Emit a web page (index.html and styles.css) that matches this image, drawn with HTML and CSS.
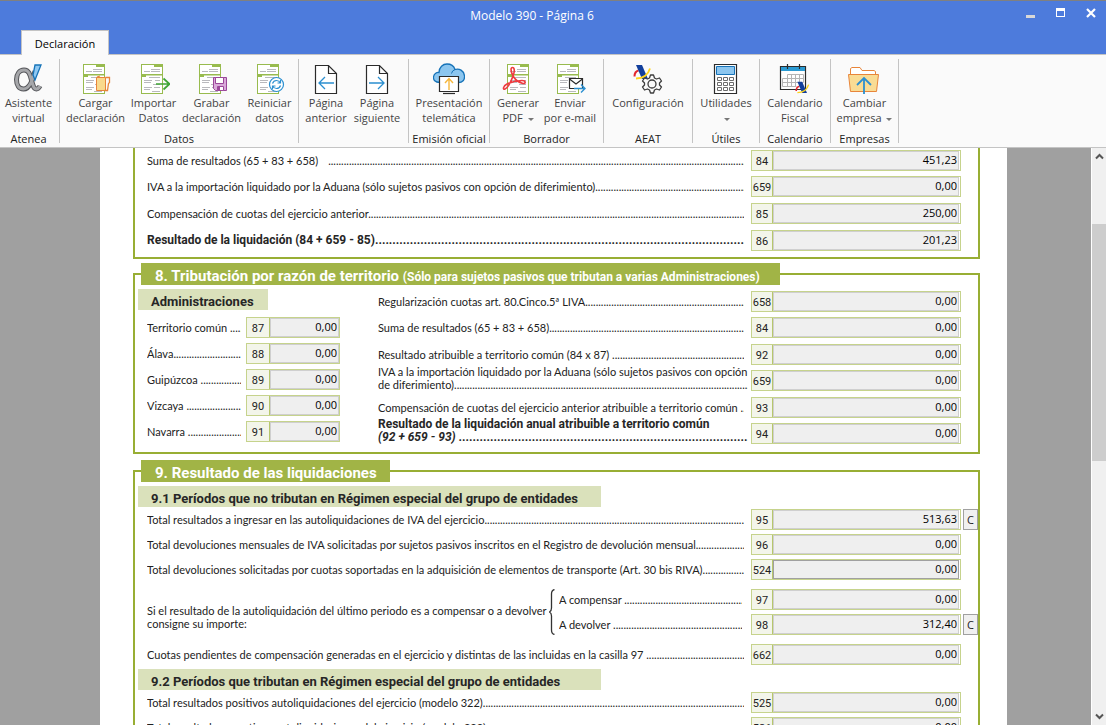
FILE: index.html
```html
<!DOCTYPE html>
<html lang="es">
<head>
<meta charset="utf-8">
<title>Modelo 390 - Página 6</title>
<link rel="stylesheet" href="styles.css">
</head>
<body>
<svg class="defs" aria-hidden="true">
  <symbol id="doc" viewBox="0 0 32 32">
    <rect x="3.5" y="1.5" width="21" height="29" fill="#fff" stroke="#98bb4e"/>
    <path d="M16 1h9v3h-9zM3 11h22v1.500H3zM3 12h5v2H3z" fill="#98bb4e"/>
    <path d="M13 6.500h9M6 8.500h6M13 8.500h9M11 14.500h11M6 17.500h8M17 17.500h5M6 19.500h7M15 21.500h7M6 24.500h8M16 24.500h6M6 26.500h6M14 28.500h8" stroke="#b9b9bd" fill="none"/>
  </symbol>
  <symbol id="aeat" viewBox="0 0 20 20">
    <path d="M1.500 12.500q0-5 4-6" fill="none" stroke="#e3262c" stroke-width="2"/>
    <path d="M3 1h6l6 14H9z" fill="#123f9c"/>
    <path d="M3 14.500q11 0 14-10" fill="none" stroke="#ffd51c" stroke-width="1.800"/>
  </symbol>
</svg>

<header class="top">
  <div class="titlebar">
    <h1 class="title">Modelo 390 - Página 6</h1>
    <div class="window-buttons">
      <button class="win" aria-label="Minimizar"><svg width="10" height="10"><path d="M0 7h9v3H0z" fill="#d8d8d8"/></svg></button>
      <button class="win" aria-label="Maximizar"><svg width="10" height="10"><path d="M0 0h9v9H0zM1 3v5h7V3z" fill="#fff" fill-rule="evenodd"/></svg></button>
      <button class="win" aria-label="Cerrar"><svg width="10" height="10"><path d="M1 1l8 8M9 1l-8 8" stroke="#fff" stroke-width="2.200"/></svg></button>
    </div>
  </div>
  <nav class="tabs"><button class="tab">Declaración</button></nav>
</header>

<div class="ribbon">
  <section class="group g-atenea">
    <div class="tools">
      <button class="tool">
        <svg class="icon" viewBox="0 0 32 32"><path d="M23 8C21 16 18 26 11.500 26C7 26 4.500 22 4.500 16.500C4.500 11 7.500 7 12 7C19 7 18.500 17 21.500 23.500C22.500 26.500 26 27 28 23" fill="none" stroke="#55565a" stroke-width="5"/><path d="M23 8C21 16 18 26 11.500 26C7 26 4.500 22 4.500 16.500C4.500 11 7.500 7 12 7C19 7 18.500 17 21.500 23.500C22.500 26.500 26 27 28 23" fill="none" stroke="#a6a7aa" stroke-width="3"/><path d="M23 2h6l-6 15-2-5z" fill="#8fc8f2" stroke="#1673b8" stroke-width="1.300"/></svg>
        <span>Asistente<br>virtual</span></button>
    </div>
    <h2 class="group-name">Atenea</h2>
  </section>
  <section class="group g-datos">
    <div class="tools cols-4">
      <button class="tool">
        <svg class="icon" viewBox="0 0 32 32"><use href="#doc"/><path d="M16.500 14.500h9v13h-9z" fill="#f9d98c" stroke="#e8853a"/><path d="M17 14l3-1M25.500 14.500h4v5l-1 1-1 7h-3" fill="none" stroke="#e8853a" stroke-width="1.300"/></svg>
        <span>Cargar<br>declaración</span></button>
      <button class="tool">
        <svg class="icon" viewBox="0 0 32 32"><use href="#doc"/><path d="M18 21h13M25.500 15.500l6 5.500-6 5.500" fill="none" stroke="#3fa535" stroke-width="1.700"/></svg>
        <span>Importar<br>Datos</span></button>
      <button class="tool">
        <svg class="icon" viewBox="0 0 32 32"><use href="#doc"/><path d="M17.500 14.500h13v13h-11l-2-2z" fill="#d9a9d9" stroke="#9b4799"/><path d="M19.500 14.500h8v6h-8zM21.500 23.500h6v4h-6z" fill="#fff" stroke="#9b4799"/><path d="M22 24h2v3h-2z" fill="#9b4799"/></svg>
        <span>Grabar<br>declaración</span></button>
      <button class="tool">
        <svg class="icon" viewBox="0 0 32 32"><use href="#doc"/><circle cx="22.500" cy="21.500" r="7" fill="#fff" stroke="#2b8fd0" stroke-width="1.200"/><path d="M18.500 20.500q1-3 4-3 2.500 0 4 2.500M26.500 17v3h-3M26.500 22.500q-1 3-4 3-2.500 0-4-2.500M18.500 26v-3h3" fill="none" stroke="#2b8fd0" stroke-width="1.200"/></svg>
        <span>Reiniciar<br>datos</span></button>
    </div>
    <h2 class="group-name">Datos</h2>
  </section>
  <section class="group g-paginas">
    <div class="tools cols-2">
      <button class="tool">
        <svg class="icon" viewBox="0 0 32 32"><path d="M5.500 2.500h13l8 8v20h-21zM18.500 2.500v8h8" fill="#fff" stroke="#2b2b2b" stroke-width="1.200"/><path d="M9 20h15M15 14l-6 6 6 6" fill="none" stroke="#2b8fd0" stroke-width="1.300"/></svg>
        <span>Página<br>anterior</span></button>
      <button class="tool">
        <svg class="icon" viewBox="0 0 32 32"><path d="M5.500 2.500h13l8 8v20h-21zM18.500 2.500v8h8" fill="#fff" stroke="#2b2b2b" stroke-width="1.200"/><path d="M8 20h15M17 14l6 6-6 6" fill="none" stroke="#2b8fd0" stroke-width="1.300"/></svg>
        <span>Página<br>siguiente</span></button>
    </div>
  </section>
  <section class="group g-emision">
    <div class="tools">
      <button class="tool">
        <svg class="icon" viewBox="0 0 32 32"><path d="M7 19.500C2 19.500 0 17 .600 13.500 1 10.500 4 9 6 9.500 6 4 10 1 14 1c4 0 7 2.500 8 5.500 4-1.500 9 1 9.500 6.500.300 4-2 6.500-6 6.500z" fill="#8cc6ef" stroke="#1673b8" stroke-width="1.300"/><path d="M22 6.500q-3 1-3.500 4" fill="none" stroke="#1673b8"/><path d="M6.500 13.500h19v15h-19z" fill="#fff" stroke="#2b2b2b" stroke-width="1.200"/><path d="M10 30.500h12" stroke="#2b2b2b" stroke-width="1.200"/><path d="M16 27V16M12 20l4-4.500 4 4.500" fill="none" stroke="#f6b73c" stroke-width="1.400"/></svg>
        <span>Presentación<br>telemática</span></button>
    </div>
    <h2 class="group-name">Emisión oficial</h2>
  </section>
  <section class="group g-borrador">
    <div class="tools cols-2">
      <button class="tool">
        <svg class="icon" viewBox="0 0 32 32"><use href="#doc" x="2" width="32" height="32"/><path d="M11 13C8.500 8 8.500 4.500 10.500 4.500S13 8 11 13C9 18.500 5.500 25 3 26S1 23 5 21C9 19 16 17.500 20 17.500S24 21 21 20.500C17 19.500 13 16.500 11 13z" fill="none" stroke="#ee3a3f" stroke-width="1.600"/></svg>
        <span>Generar<br>PDF <i class="caret"></i></span></button>
      <button class="tool">
        <svg class="icon" viewBox="0 0 32 32"><use href="#doc"/><path d="M15.500 15.500h13v10h-13z" fill="#fff" stroke="#2b2b2b" stroke-width="1.200"/><path d="M15.500 16l6.500 5 6.500-5" fill="none" stroke="#2b2b2b" stroke-width="1.200"/><path d="M20 25.500h11M27 21.500l4 4-4 4" fill="none" stroke="#2b8fd0" stroke-width="1.400"/></svg>
        <span>Enviar<br>por e-mail</span></button>
    </div>
    <h2 class="group-name">Borrador</h2>
  </section>
  <section class="group g-aeat">
    <div class="tools">
      <button class="tool">
        <svg class="icon" viewBox="0 0 32 32"><use href="#aeat" x="1" y="1" width="20" height="20"/><path d="M18.500 12h3l1 3 2 1 3-1 2 3-2 2v2l2 2-2 3-3-1-2 1-1 3h-3l-1-3-2-1-3 1-2-3 2-2v-2l-2-2 2-3 3 1 2-1z" fill="#fafafa" stroke="#3d3d3d" stroke-width="1.300" stroke-linejoin="round"/><circle cx="20" cy="21" r="4" fill="none" stroke="#3d3d3d" stroke-width="1.300"/></svg>
        <span>Configuración</span></button>
    </div>
    <h2 class="group-name">AEAT</h2>
  </section>
  <section class="group g-utiles">
    <div class="tools">
      <button class="tool">
        <svg class="icon" viewBox="0 0 32 32"><path d="M4.500 1.500h22v29h-22z" fill="#fff" stroke="#2b2b2b" stroke-width="1.200"/><path d="M6.500 3.500h18v8h-18z" fill="#8cc6ef" stroke="#1673b8"/><path d="M7.500 14.500h4v3h-4zM13.500 14.500h4v3h-4zM19.500 14.500h4v3h-4zM7.500 19.500h4v3h-4zM13.500 19.500h4v3h-4zM19.500 19.500h4v3h-4zM7.500 24.500h4v3h-4zM13.500 24.500h4v3h-4zM19.500 24.500h4v3h-4z" fill="#fff" stroke="#6b6b6b"/></svg>
        <span>Utilidades<br><i class="caret"></i></span></button>
    </div>
    <h2 class="group-name">Útiles</h2>
  </section>
  <section class="group g-calendario">
    <div class="tools">
      <button class="tool">
        <svg class="icon" viewBox="0 0 32 32"><path d="M1.500 3.500h25v23h-25z" fill="#fff" stroke="#2b2b2b" stroke-width="1.200"/><path d="M2 4h24v4H2z" fill="#2b9bd3"/><path d="M8.500 1v5M20.500 1v5" stroke="#2b2b2b" stroke-width="1.200"/><path d="M8.500 11.500h16M3.500 15.500h21M3.500 19.500h21M3.500 23.500h14M3.500 15.500v8M8.500 11.500v12M12.500 11.500v12M16.500 11.500v12M20.500 11.500v8M24.500 11.500v8" fill="none" stroke="#b5b5b5"/><use href="#aeat" x="16" y="18" width="16" height="16"/></svg>
        <span>Calendario<br>Fiscal</span></button>
    </div>
    <h2 class="group-name">Calendario</h2>
  </section>
  <section class="group g-empresas">
    <div class="tools">
      <button class="tool">
        <svg class="icon" viewBox="0 0 32 32"><path d="M2.500 11.500v-6l1.500-1h8l2 3h12l1.500 1v3" fill="#fff" stroke="#e8853a"/><path d="M.500 11.500h30l-2 17h-26z" fill="#f9dc94" stroke="#e8853a"/><path d="M16 31V15M9 22l7-7 7 7" fill="none" stroke="#2b8fd0" stroke-width="1.800"/></svg>
        <span>Cambiar<br>empresa <i class="caret"></i></span></button>
    </div>
    <h2 class="group-name">Empresas</h2>
  </section>
</div>

<main class="viewer">
  <div class="desk">
    <form class="page">
      <section class="block first">
        <div class="row"><label class="label spaced" for="a84">Suma de resultados (65 + 83 + 658)</label><div class="box"><span class="code">84</span><input class="value" id="a84" value="451,23"></div></div>
        <div class="row tight"><label class="label" for="a659">IVA a la importación liquidado por la Aduana (sólo sujetos pasivos con opción de diferimiento)</label><div class="box"><span class="code">659</span><input class="value" id="a659" value="0,00"></div></div>
        <div class="row"><label class="label" for="a85">Compensación de cuotas del ejercicio anterior</label><div class="box"><span class="code">85</span><input class="value" id="a85" value="250,00"></div></div>
        <div class="row"><label class="label strong" for="a86">Resultado de la liquidación (84 + 659 - 85)</label><div class="box"><span class="code">86</span><input class="value" id="a86" value="201,23"></div></div>
      </section>

      <section class="block">
        <h2 class="heading wide">8. Tributación por razón de territorio <small>(Sólo para sujetos pasivos que tributan a varias Administraciones)</small></h2>
        <div class="territory">
          <div class="admins">
            <h3 class="band short">Administraciones</h3>
            <div class="row"><label class="label" for="b87">Territorio común </label><div class="box"><span class="code">87</span><input class="value" id="b87" value="0,00"></div></div>
            <div class="row tight"><label class="label" for="b88">Álava</label><div class="box"><span class="code">88</span><input class="value" id="b88" value="0,00"></div></div>
            <div class="row tight"><label class="label" for="b89">Guipúzcoa </label><div class="box"><span class="code">89</span><input class="value" id="b89" value="0,00"></div></div>
            <div class="row tight"><label class="label" for="b90">Vizcaya </label><div class="box"><span class="code">90</span><input class="value" id="b90" value="0,00"></div></div>
            <div class="row tight"><label class="label" for="b91">Navarra </label><div class="box"><span class="code">91</span><input class="value" id="b91" value="0,00"></div></div>
          </div>
          <div class="results">
            <div class="row"><label class="label" for="c658">Regularización cuotas art. 80.Cinco.5ª LIVA</label><div class="box"><span class="code">658</span><input class="value" id="c658" value="0,00"></div></div>
            <div class="row tight"><label class="label" for="c84">Suma de resultados (65 + 83 + 658)</label><div class="box"><span class="code">84</span><input class="value" id="c84" value="0,00"></div></div>
            <div class="row"><label class="label" for="c92">Resultado atribuible a territorio común (84 x 87) </label><div class="box"><span class="code">92</span><input class="value" id="c92" value="0,00"></div></div>
            <div class="row tight two-line"><label class="label" for="c659">IVA a la importación liquidado por la Aduana (sólo sujetos pasivos con opción<br>de diferimiento)</label><div class="box"><span class="code">659</span><input class="value" id="c659" value="0,00"></div></div>
            <div class="row"><label class="label" for="c93">Compensación de cuotas del ejercicio anterior atribuible a territorio común </label><div class="box"><span class="code">93</span><input class="value" id="c93" value="0,00"></div></div>
            <div class="row tight two-line"><label class="label strong" for="c94">Resultado de la liquidación anual atribuible a territorio común<br><em>(92 + 659 - 93) </em></label><div class="box"><span class="code">94</span><input class="value" id="c94" value="0,00"></div></div>
          </div>
        </div>
      </section>

      <section class="block">
        <h2 class="heading">9. Resultado de las liquidaciones</h2>
        <h3 class="band">9.1 Períodos que no tributan en Régimen especial del grupo de entidades</h3>
        <div class="dense">
          <div class="row"><label class="label" for="d95">Total resultados a ingresar en las autoliquidaciones de IVA del ejercicio</label><div class="box"><span class="code">95</span><input class="value" id="d95" value="513,63"></div><button class="calc" type="button">C</button></div>
          <div class="row"><label class="label" for="d96">Total devoluciones mensuales de IVA solicitadas por sujetos pasivos inscritos en el Registro de devolución mensual</label><div class="box"><span class="code">96</span><input class="value" id="d96" value="0,00"></div></div>
          <div class="row"><label class="label" for="d524">Total devoluciones solicitadas por cuotas soportadas en la adquisición de elementos de transporte (Art. 30 bis RIVA)</label><div class="box"><span class="code">524</span><input class="value current" id="d524" value="0,00"></div></div>
          <div class="choice">
            <p class="question">Si el resultado de la autoliquidación del último periodo es a compensar o a devolver<br>consigne su importe:</p>
            <svg class="brace" viewBox="0 0 6 46" width="6" height="46"><path d="M5.500.500Q2.500 1 2.500 5v14q0 3-2 4 2 1 2 4v14q0 4 3 4.500" fill="none" stroke="#333" stroke-width="1.300"/></svg>
            <div class="options">
              <div class="row"><label class="label" for="d97">A compensar </label><div class="box"><span class="code">97</span><input class="value" id="d97" value="0,00"></div></div>
              <div class="row"><label class="label" for="d98">A devolver </label><div class="box"><span class="code">98</span><input class="value" id="d98" value="312,40"></div><button class="calc" type="button">C</button></div>
            </div>
          </div>
          <div class="row"><label class="label" for="d662">Cuotas pendientes de compensación generadas en el ejercicio y distintas de las incluidas en la casilla 97 </label><div class="box"><span class="code">662</span><input class="value" id="d662" value="0,00"></div></div>
        </div>
        <h3 class="band">9.2 Períodos que tributan en Régimen especial del grupo de entidades</h3>
        <div class="dense">
          <div class="row"><label class="label" for="e525">Total resultados positivos autoliquidaciones del ejercicio (modelo 322)</label><div class="box"><span class="code">525</span><input class="value" id="e525" value="0,00"></div></div>
          <div class="row"><label class="label" for="e526">Total resultados negativos autoliquidaciones del ejercicio (modelo 322)</label><div class="box"><span class="code">526</span><input class="value" id="e526" value="0,00"></div></div>
        </div>
      </section>
    </form>
  </div>
  <div class="scrollbar">
    <button class="arrow" aria-label="Subir"><svg width="9" height="7"><path d="M1 5.500l3.500-3.500L8 5.500" fill="none" stroke="#555" stroke-width="2"/></svg></button>
    <div class="track"><div class="thumb"></div></div>
    <button class="arrow" aria-label="Bajar"><svg width="9" height="7"><path d="M1 1.500L4.500 5 8 1.500" fill="none" stroke="#555" stroke-width="2"/></svg></button>
  </div>
</main>
</body>
</html>
```

FILE: styles.css
```css
* { box-sizing: border-box; }

body {
  margin: 0;
  height: 100vh;
  display: flex;
  flex-direction: column;
  overflow: hidden;
  font: 11px/15px "Open Sans", "Noto Sans", sans-serif;
  color: #222;
}

h1, h2, h3, p { margin: 0; font-weight: normal; }
button, input { font: inherit; color: inherit; border: 0; padding: 0; background: none; }
.defs { display: none; }

/* Title bar and tabs */
.top { flex: none; background: #4d7bdc; border-top: 1px solid #808080; border-bottom: 1px solid #c4c4c4; }
.titlebar { display: grid; grid-template-columns: 1fr auto 1fr; height: 29px; }
.title { grid-column: 2; color: #fff; font-size: 12px; line-height: 30px; padding-right: 42px; }
.window-buttons { display: flex; align-items: flex-start; justify-content: flex-end; gap: 20px; padding: 7px 10px 0 0; }
.win { display: flex; }
.tabs { display: flex; padding-left: 21px; height: 24px; }
.tab {
  width: 88px;
  height: 25px;
  background: #fafafa;
  border: 1px solid #c4c4c4;
  border-bottom: 0;
  color: #000;
}

/* Ribbon */
.ribbon {
  flex: none;
  display: flex;
  height: 93px;
  padding: 4px 0;
  background: #fafafa;
  border-bottom: 1px solid #c4c4c4;
}
.group { display: flex; flex-direction: column; justify-content: space-between; border-right: 1px solid #c4c4c4; }
.tools { display: grid; justify-content: center; padding-top: 4px; }
.cols-4 { grid-template-columns: repeat(4, 58px); padding-left: 7px; }
.tool { display: flex; flex-direction: column; align-items: center; color: #444; white-space: nowrap; }
.icon { width: 32px; height: 32px; }
.group-name { font-size: 11px; line-height: 15px; text-align: center; margin-bottom: -3px; white-space: nowrap; }
.caret {
  display: inline-block;
  margin-left: 2px;
  vertical-align: middle;
  border: 3px solid transparent;
  border-top-color: #777;
  border-bottom: 0;
}
.g-atenea { width: 60px; }
.g-atenea .tools, .g-atenea .group-name { padding-right: 2px; }
.g-datos { width: 239px; }
.g-paginas { width: 110px; }
.g-paginas .cols-2 { grid-template-columns: 51px 51px; padding-right: 4px; }
.g-emision { width: 81px; }
.g-borrador { width: 114px; }
.g-borrador .cols-2 { grid-template-columns: 52px 52px; padding-right: 5px; }
.g-aeat { width: 89px; }
.g-utiles { width: 67px; }
.g-calendario { width: 71px; }
.g-empresas { width: 68px; }

/* Form viewer */
.viewer { flex: 1; display: flex; min-height: 0; }
.desk { flex: 1; min-width: 0; overflow: hidden; padding: 0 84px 0 100px; background: #a0a0a0; }
.page {
  min-height: 100%;
  padding: 0 27px 0 33px;
  background: #fff;
  font-family: Lato, "Liberation Sans", sans-serif;
  font-size: 11px;
  line-height: 13px;
  color: #222;
}
.block { border: 2px solid #98ae34; margin-top: 16px; padding-bottom: 8px; }
.block.first { margin-top: 0; padding: 2px 0 6px; border-top: 0; }
.block.first + .block { margin-top: 14px; }
.heading, .band, .strong, .code { font-family: Roboto, "Liberation Sans", sans-serif; }
.heading {
  width: 249px;
  height: 22px;
  margin: -12px 0 0 6px;
  padding-left: 14px;
  background: #a1b446;
  color: #fff;
  font-size: 15px;
  line-height: 26px;
  font-weight: bold;
  white-space: nowrap;
}
.heading.wide { width: 639px; }
.heading small { font-size: 12px; }
.band {
  width: 463px;
  height: 21px;
  margin: 4px 0 2px 3px;
  padding-left: 13px;
  background: #dae1bb;
  color: #262626;
  font-size: 13px;
  line-height: 26px;
  font-weight: bold;
  white-space: nowrap;
}
.band.short { width: 130px; margin-bottom: 7px; }

.row { display: flex; align-items: center; height: 21px; margin-top: 6px; padding: 0 17px 0 12px; position: relative; }
.row.tight { margin-top: 5px; }
.row:first-child, .band + .row { margin-top: 0; }
.label { flex: 1; min-width: 0; height: 16px; padding-top: 1px; overflow: hidden; white-space: nowrap; margin-right: 7px; }
.label::after {
  content: "......................................................................................................................................................................................";
}
.label.spaced::after { margin-left: 10px; }
.two-line { align-items: flex-end; }
.two-line .label { height: 26px; padding-top: 0; margin-right: 3px; }
.strong { font-weight: bold; font-size: 12px; color: #262626; }
.box { flex: none; display: flex; width: 210px; height: 21px; border: 1px solid #c6d38c; padding-right: 1px; }
.code { flex: none; width: 21px; text-align: center; line-height: 21px; background: #f3f5ea; border-right: 1px solid #b7c76c; }
.value {
  flex: 1;
  min-width: 0;
  padding: 0 1px 3px 0;
  background: #efefef;
  border: 1px solid #cfcfcf;
  font: 11px "Open Sans", "Noto Sans", sans-serif;
  color: #000;
  text-align: right;
}
.value.current { border-color: #a0a0a0; }
.calc {
  position: absolute;
  right: 0;
  width: 15px;
  height: 21px;
  border: 1px solid #a0a0a0;
  background: #f0f0f0;
  font: 11px "Open Sans", "Noto Sans", sans-serif;
}

.territory { display: grid; grid-template-columns: 243px minmax(0, 1fr); }
.admins .row { padding-right: 38px; }
.admins .label { margin-right: 5px; }
.admins .box { width: 94px; padding-right: 0; }
.admins .code { width: 23px; }
.results { padding-top: 6px; }
.results .row { padding-left: 0; }

.dense .row { margin-top: 4px; }
.dense .row:first-child { margin-top: 0; }
.choice { display: flex; align-items: center; margin: 9px 0; padding-left: 12px; }
.question { flex: none; width: 402px; white-space: nowrap; padding-top: 10px; }
.brace { flex: none; }
.options { flex: 1; min-width: 0; }
.options .row { padding-left: 4px; }
.options .label { margin-right: 9px; }

/* Scroll bar */
.scrollbar { flex: none; width: 15px; display: flex; flex-direction: column; background: #f0f0f0; border-left: 1px solid #fff; }
.arrow { height: 17px; display: flex; align-items: center; justify-content: center; }
.track { flex: 1; display: flex; flex-direction: column; }
.track::before { content: ""; flex: 59; }
.track::after { content: ""; flex: 247; }
.thumb { flex: 237; background: #cdcdcd; }
```
